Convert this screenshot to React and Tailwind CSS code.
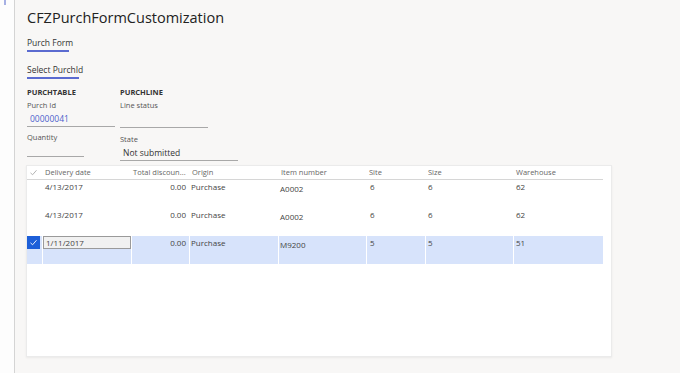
import React from 'react';

const columns = [
  { key: 'check', label: '', width: 'w-[16px]' },
  { key: 'date', label: 'Delivery date', width: 'w-[89px]' },
  { key: 'discount', label: 'Total discoun...', width: 'w-[58px]' },
  { key: 'origin', label: 'Origin', width: 'w-[89px]' },
  { key: 'item', label: 'Item number', width: 'w-[88px]' },
  { key: 'site', label: 'Site', width: 'w-[59px]' },
  { key: 'size', label: 'Size', width: 'w-[88px]' },
  { key: 'warehouse', label: 'Warehouse', width: 'w-[89px]' },
];

const lines = [
  { date: '4/13/2017', discount: '0.00', origin: 'Purchase', item: 'A0002', site: '6', size: '6', warehouse: '62' },
  { date: '4/13/2017', discount: '0.00', origin: 'Purchase', item: 'A0002', site: '6', size: '6', warehouse: '62' },
  { date: '1/11/2017', discount: '0.00', origin: 'Purchase', item: 'M9200', site: '5', size: '5', warehouse: '51', selected: true },
];

function CheckIcon({ className }) {
  return (
    <svg className={className} viewBox="0 0 12 12" fill="none" stroke="currentColor" strokeWidth={1.2}>
      <polyline points="2,6.5 4.8,9 10,3" />
    </svg>
  );
}

function Tab({ label, width }) {
  return (
    <div className="flex flex-col">
      <div className="text-[8.5px] leading-[12px] text-[#333]">{label}</div>
      <div className={`${width} h-[2px] mt-[1px] bg-[#5b6bd0]`} />
    </div>
  );
}

function Field({ label, value, valueClass, lineWidth, gap }) {
  return (
    <div className="flex flex-col">
      <div className="text-[7.5px] leading-[10px] text-[#555]">{label}</div>
      <div className={`text-[8.5px] leading-[12px] ${valueClass} ${gap}`}>{value || '\u00a0'}</div>
      <div className={`${lineWidth} h-[1px] mt-[1px] bg-[#a8a8a8]`} />
    </div>
  );
}

function GridRow({ row }) {
  const sep = row.selected ? 'border-r border-white' : 'border-r border-transparent';
  return (
    <div className={`flex h-[28px] ${row.selected ? 'bg-[#d7e3fb]' : ''}`}>
      <div className={`w-[16px] ${sep}`}>
        {row.selected && (
          <div className="w-[13px] h-[13px] bg-[#1d5fd8] flex items-center justify-center">
            <CheckIcon className="w-[9px] h-[9px] text-white" />
          </div>
        )}
      </div>
      <div className={`w-[89px] ${sep}`}>
        {row.selected ? (
          <div className="h-[13px] w-[88px] border border-[#9a9a9a] bg-[#f1f1f1] pl-[2px] leading-[11px]">{row.date}</div>
        ) : (
          <div className="pl-[2px] pt-[1px] leading-[12px]">{row.date}</div>
        )}
      </div>
      <div className={`w-[58px] ${sep} pr-[3px] pt-[1px] leading-[12px] text-right`}>{row.discount}</div>
      <div className={`w-[89px] ${sep} pl-[1px] pt-[1px] leading-[12px]`}>{row.origin}</div>
      <div className={`w-[88px] ${sep} pl-[1px] pt-[3px] leading-[12px]`}>{row.item}</div>
      <div className={`w-[59px] ${sep} pl-[3px] pt-[1px] leading-[12px]`}>{row.site}</div>
      <div className={`w-[88px] ${sep} pl-[2px] pt-[1px] leading-[12px]`}>{row.size}</div>
      <div className="w-[89px] pl-[2px] pt-[1px] leading-[12px]">{row.warehouse}</div>
    </div>
  );
}

export default function App() {
  return (
    <div className="w-[680px] h-[373px] flex overflow-hidden" style={{ fontFamily: '"Open Sans", "Noto Sans", sans-serif' }}>
      <div className="w-[15px] h-full bg-[#fdfdfd] border-r border-[#d4d4d4]">
        <div className="w-[2px] h-[5px] ml-[4px] bg-[#a6b0e4]" />
      </div>

      <div className="flex-1 bg-[#f8f7f6] pl-[11px]">
        <h1 className="pl-[1px] mt-[8px] text-[14.5px] leading-[20px] text-[#222]">CFZPurchFormCustomization</h1>

        <div className="pl-[1px] mt-[9px]">
          <Tab label="Purch Form" width="w-[42px]" />
        </div>
        <div className="pl-[1px] mt-[12px]">
          <Tab label="Select PurchId" width="w-[52px]" />
        </div>

        <div className="pl-[1px] mt-[8px] flex">
          <div className="w-[93px] flex flex-col">
            <div className="text-[7.5px] leading-[10px] font-bold text-[#333] mb-[3px]">PURCHTABLE</div>
            <Field label="Purch Id" value="00000041" valueClass="text-[#4d5fcc] pl-[3px]" lineWidth="w-[88px]" gap="mt-[3px]" />
            <div className="mt-[5px] text-[7.5px] leading-[10px] text-[#555]">Quantity</div>
            <div className="w-[57px] h-[1px] mt-[14px] bg-[#a8a8a8]" />
          </div>
          <div className="flex flex-col">
            <div className="text-[7.5px] leading-[10px] font-bold text-[#333] mb-[3px]">PURCHLINE</div>
            <Field label="Line status" value="" valueClass="text-[#333]" lineWidth="w-[88px]" gap="mt-[4px]" />
            <div className="mt-[6px] text-[7.5px] leading-[10px] text-[#555]">State</div>
            <div className="mt-[3px] pl-[3px] text-[8.5px] leading-[12px] text-[#333]">Not submitted</div>
            <div className="w-[118px] h-[1px] mt-[1px] bg-[#a8a8a8]" />
          </div>
        </div>

        <div className="mt-[4px] w-[586px] h-[192px] bg-white border border-[#ebebeb] shadow-[0_1px_2px_rgba(0,0,0,0.06)]">
          <div className="w-[576px] text-[8px] text-[#444]">
            <div className="flex h-[14px] border-b border-[#d6d6d6] text-[7.5px] leading-[13px] text-[#666]">
              {columns.map((col) => (
                <div key={col.key} className={`${col.width} ${col.key === 'discount' ? 'pl-[1px]' : 'pl-[2px]'} whitespace-nowrap overflow-hidden`}>
                  {col.key === 'check' ? <CheckIcon className="w-[9px] h-[9px] mt-[2px] text-[#aaa]" /> : col.label}
                </div>
              ))}
            </div>
            {lines.map((row, i) => (
              <GridRow key={i} row={row} />
            ))}
          </div>
        </div>
      </div>
    </div>
  );
}
